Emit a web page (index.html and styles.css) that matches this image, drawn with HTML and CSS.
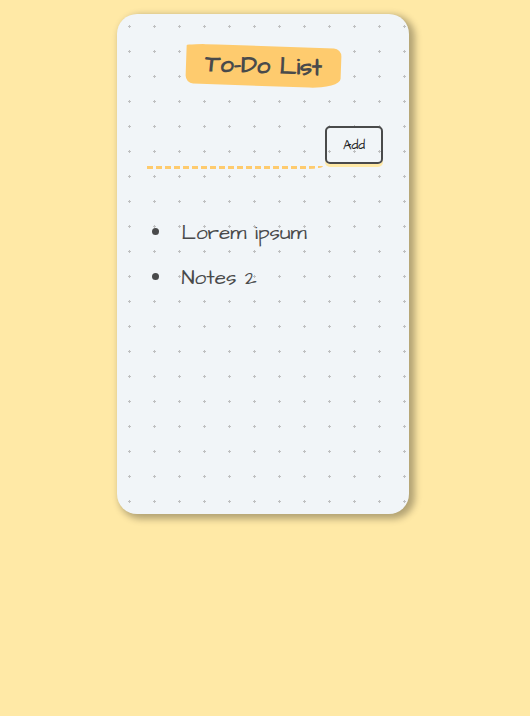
FILE: index.html
```html
<!DOCTYPE html>
<html lang="en">
<head>
<meta charset="utf-8">
<title>To-Do List</title>
<link rel="stylesheet" href="styles.css">
</head>
<body>
<main class="card">
  <h1 class="title">To-Do List</h1>
  <form class="entry">
    <input class="entry-input" type="text">
    <button class="entry-button" type="button">Add</button>
  </form>
  <ul class="list">
    <li class="item"><span class="item-text">Lorem ipsum</span></li>
    <li class="item"><span class="item-text">Notes 2</span></li>
  </ul>
</main>
</body>
</html>
```
FILE: styles.css
```css
* {
  box-sizing: border-box;
}

body {
  margin: 0;
  padding: 14px 4px 0 0;
  min-height: 716px;
  background: #ffe9a6;
  color: #494a4b;
  font-family: "Architects Daughter", Lato, "Open Sans", sans-serif;
}

.card {
  width: 292px;
  height: 500px;
  margin: 0 auto;
  padding: 32px 26px 0 30px;
  border-radius: 20px;
  background-color: #f1f5f8;
  background-image: radial-gradient(#bfc0c1 7.2%, transparent 0);
  background-size: 25px 25px;
  box-shadow: 4px 3px 7px 2px rgba(0, 0, 0, 0.3);
}

.title {
  display: flex;
  align-items: center;
  justify-content: center;
  width: 155px;
  height: 40px;
  margin: 0 0 0 39px;
  border-radius: 20% 5% 20% 5% / 5% 20% 25% 20%;
  background: #fecb6e;
  font-size: 24px;
  font-weight: 700;
  line-height: 1;
  white-space: nowrap;
  transform: rotate(2deg);
}

.entry {
  display: flex;
  justify-content: space-between;
  margin-top: 40px;
}

.entry-input {
  width: 176px;
  height: 43px;
  padding: 0;
  border: 0;
  border-bottom-right-radius: 15px 3px;
  background: repeating-linear-gradient(90deg, #fecb6e 0 6px, transparent 6px 9px) bottom / 100% 3px no-repeat;
  font: inherit;
  outline: none;
}

.entry-button {
  width: 58px;
  height: 38px;
  padding: 0;
  border: 2px solid #494a4b;
  border-radius: 5px;
  background: transparent;
  box-shadow: 0 3px 0 #ffe9a6;
  color: #222;
  font-family: inherit;
  font-size: 13.33px;
}

.list {
  margin: 40px 0 0;
  padding: 0 0 0 5px;
  list-style: none;
}

.item {
  display: flex;
  align-items: center;
  gap: 22.5px;
  height: 45px;
  font-size: 20.8px;
}

.item::before {
  width: 7px;
  height: 7px;
  border-radius: 50%;
  background: #494a4b;
  content: "";
}

.item-text {
  padding-top: 1px;
  white-space: nowrap;
}
```
